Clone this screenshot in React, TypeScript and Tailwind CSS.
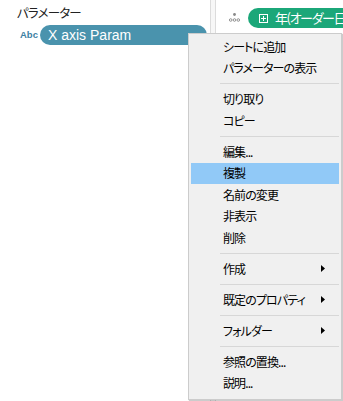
import React from "react";

type Entry = { label: string; sub?: boolean; active?: boolean } | "sep";

const entries: Entry[] = [
  { label: "シートに追加" },
  { label: "パラメーターの表示" },
  "sep",
  { label: "切り取り" },
  { label: "コピー" },
  "sep",
  { label: "編集..." },
  { label: "複製", active: true },
  { label: "名前の変更" },
  { label: "非表示" },
  { label: "削除" },
  "sep",
  { label: "作成", sub: true },
  "sep",
  { label: "既定のプロパティ", sub: true },
  "sep",
  { label: "フォルダー", sub: true },
  "sep",
  { label: "参照の置換..." },
  { label: "説明..." },
];

const jp = "[font-family:'Noto_Sans_CJK_JP','Noto_Sans',sans-serif] [font-feature-settings:'palt']";

export default function App() {
  return (
    <div className="relative w-[343px] h-[401px] bg-white overflow-hidden">
      <div className="flex h-full">
        {/* left panel */}
        <div className="w-[210px] shrink-0 flex flex-col">
          <div className={`pl-[17px] pt-[5px] text-[12.5px] leading-[16px] tracking-[-0.8px] text-[#222] ${jp}`}>パラメーター</div>
          <div className="flex items-center mt-[4px] pl-[20px]">
            <span className="text-[9.5px] font-bold text-[#3d7fa3] [font-family:'Liberation_Sans',sans-serif] w-[20px]">Abc</span>
            <div className="w-[167px] h-[20px] rounded-full bg-[#4a93ad] flex items-center pl-[8px] text-white text-[14px] [font-family:'Liberation_Sans',sans-serif]">
              X axis Param
            </div>
          </div>
        </div>
        {/* divider */}
        <div className="w-[6px] shrink-0 h-full border-l border-r border-[#dcdcdc] bg-[#f7f7f7]" />
        {/* right panel */}
        <div className="flex-1 min-w-0 flex flex-col">
          <div className="flex items-center h-[20px] mt-[8px] pl-[13px]">
            <svg width="11" height="10" viewBox="0 0 11 10" className="mr-[8px] shrink-0">
              <circle cx="5.5" cy="1.5" r="1.4" fill="#888" />
              <circle cx="1.7" cy="7" r="1.3" fill="none" stroke="#888" strokeWidth="0.9" />
              <circle cx="5.5" cy="7" r="1.3" fill="none" stroke="#888" strokeWidth="0.9" />
              <circle cx="9.3" cy="7" r="1.3" fill="none" stroke="#888" strokeWidth="0.9" />
            </svg>
            <div className="flex-1 min-w-0 h-[20px] rounded-l-full bg-[#1ba779] flex items-center pl-[11px] text-white whitespace-nowrap overflow-hidden">
              <svg width="9" height="9" viewBox="0 0 9 9" className="mr-[7px] shrink-0">
                <rect x="0.5" y="0.5" width="8" height="8" fill="none" stroke="white" strokeWidth="1" />
                <line x1="4.5" y1="2" x2="4.5" y2="7" stroke="white" strokeWidth="1" />
                <line x1="2" y1="4.5" x2="7" y2="4.5" stroke="white" strokeWidth="1" />
              </svg>
              <span className={`text-[13px] tracking-[-1.4px] ${jp}`}>年(オーダー日</span>
            </div>
          </div>
        </div>
      </div>

      {/* context menu */}
      <div className="absolute left-[188px] top-[33px] w-[154px] h-[367px] bg-[#f0f0f0] border border-[#cccccc] shadow-[1px_1px_1px_rgba(0,0,0,0.2)] pt-[2px] px-[2px]">
        {entries.map((e, i) =>
          e === "sep" ? (
            <div key={i} className="h-[9.5px] flex items-center pl-[29px]">
              <div className="w-full h-px bg-[#d7d7d7]" />
            </div>
          ) : (
            <div
              key={i}
              className={`h-[21.5px] flex items-center pl-[32px] pr-[14px] text-[12px] tracking-[-0.9px] text-black ${jp} ${
                e.active ? "bg-[#91c9f7]" : ""
              }`}
            >
              <span className="flex-1">{e.label}</span>
              {e.sub && (
                <svg width="4" height="7" viewBox="0 0 4 7">
                  <polygon points="0,0 4,3.5 0,7" fill="#000" />
                </svg>
              )}
            </div>
          )
        )}
      </div>
    </div>
  );
}
